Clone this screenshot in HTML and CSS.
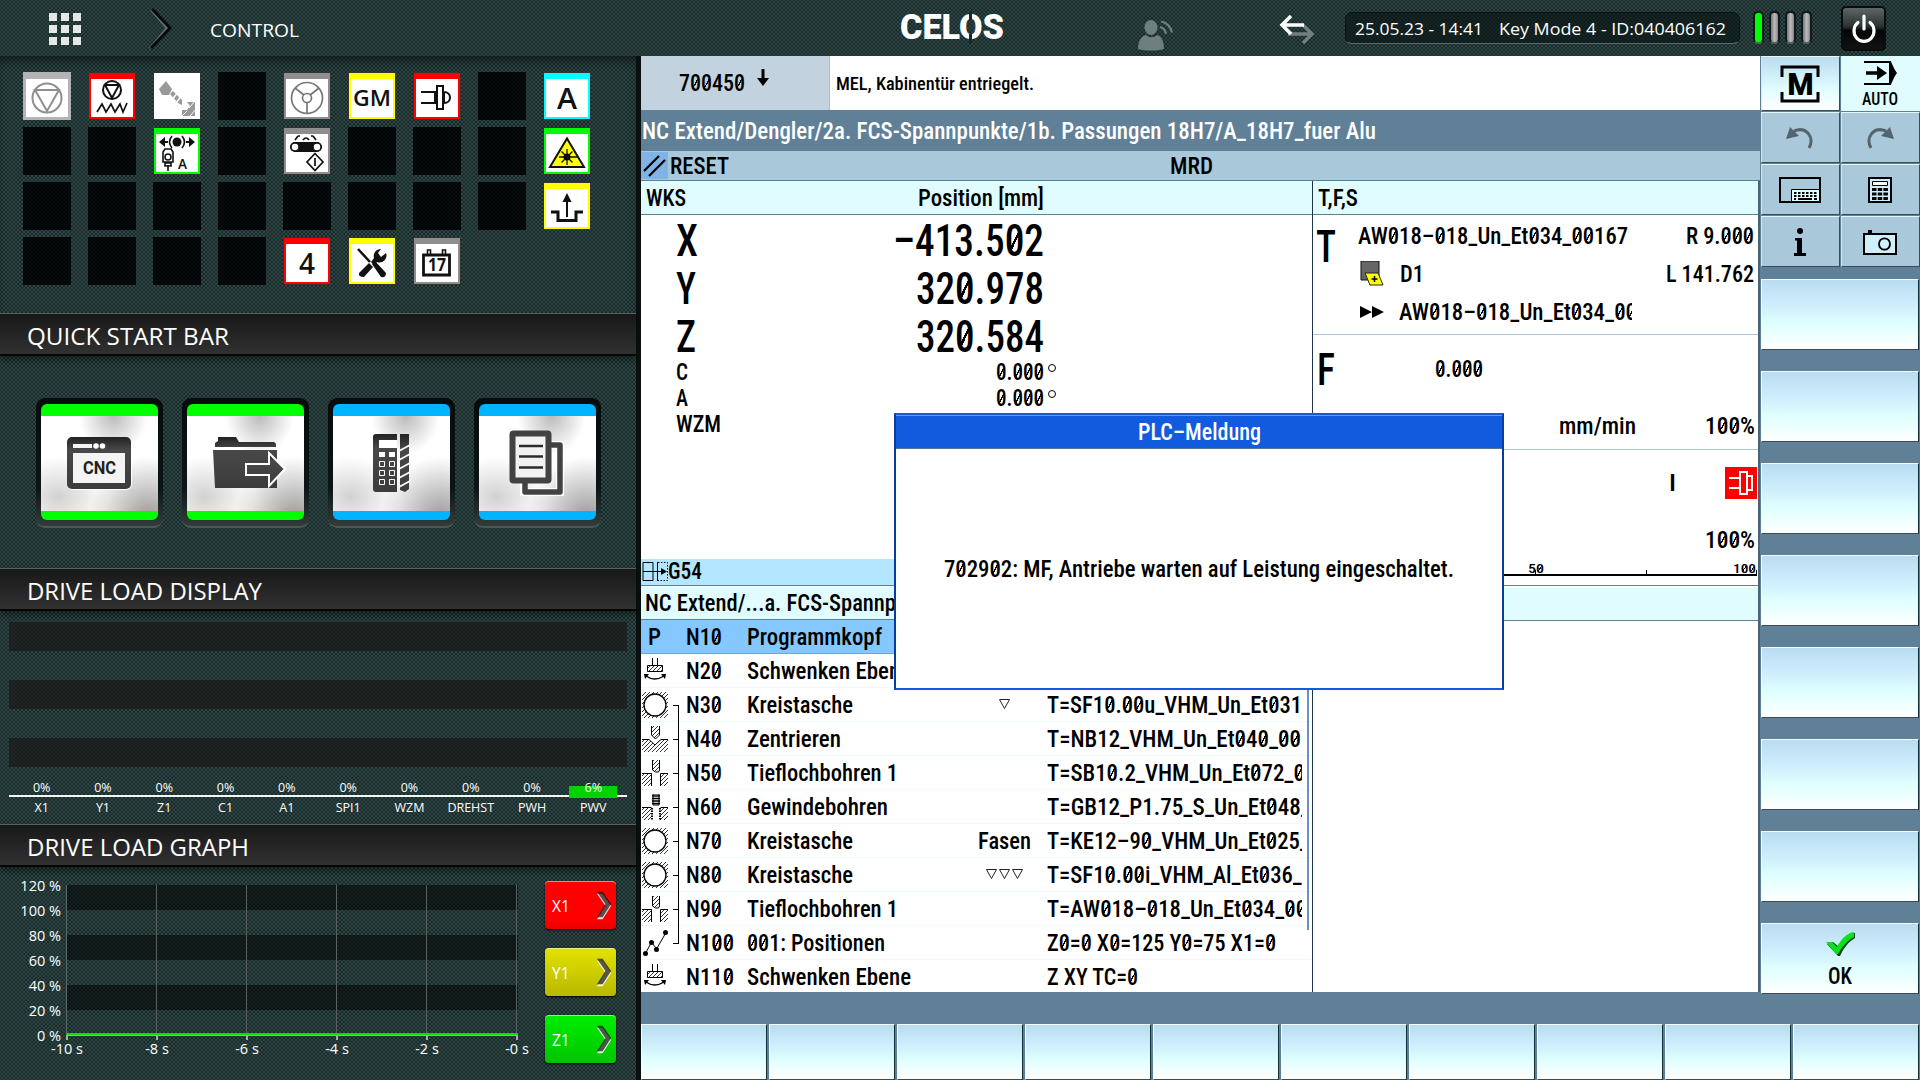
FILE: index.html
```html
<!DOCTYPE html>
<html lang="de">
<head>
<meta charset="utf-8">
<title>CELOS Control</title>
<link rel="stylesheet" href="styles.css">
</head>
<body>
<svg class="defs" aria-hidden="true">
  <defs>
    <pattern id="hatch" width="4" height="4" patternUnits="userSpaceOnUse"><path d="M-1 5L5-1M-1 1L1-1M3 5L5 3" stroke="#000" stroke-width=".8"/></pattern>
    <linearGradient id="dark" x1="0" y1="0" x2="0" y2="1"><stop offset="0" stop-color="#222"/><stop offset=".25" stop-color="#484848"/><stop offset="1" stop-color="#3c3c3c"/></linearGradient>
  </defs>
  <symbol id="i-swivel" viewBox="0 0 26 26"><path d="M10.500 0v7M15.500 0v7" stroke="#000"/><path d="M5.500 7.500h15v6h-15z" fill="url(#hatch)" stroke="#000"/><path d="M4 18q8.500 6 18 0" fill="none" stroke="#000" stroke-width="1.300"/><path d="M2 16h5l-4 5zM24 16h-5l4 5z"/></symbol>
  <symbol id="i-pocket" viewBox="0 0 26 26"><path d="M0 0h26v26H0z" fill="url(#hatch)"/><circle cx="13" cy="13" r="11" fill="#fff" stroke="#000" stroke-width="1.300"/></symbol>
  <symbol id="i-center" viewBox="0 0 26 26"><path d="M0 14h8l5 5 5-5h8v12H0z" fill="url(#hatch)"/><path d="M0 13.500h7l6 5.500 6-5.500h7" fill="none" stroke="#000"/><path d="M9.500 0v9l4 4 4-4V0" fill="url(#hatch)" stroke="#000"/></symbol>
  <symbol id="i-drill" viewBox="0 0 26 26"><path d="M0 14h9v12H0zM18 14h8v12h-8z" fill="url(#hatch)"/><path d="M0 13.500h9.500V26M26 13.500h-7.500V26" fill="none" stroke="#000"/><path d="M10.500 0v10l3 2h3l1-2V0" fill="url(#hatch)" stroke="#000"/></symbol>
  <symbol id="i-tap" viewBox="0 0 26 26"><path d="M0 14h9v12H0zM18 14h8v12h-8z" fill="url(#hatch)"/><path d="M0 13.500h9.500M26 13.500h-7.500" stroke="#000"/><path d="M10 14v12M18 14v12" stroke="#000" stroke-width="2" stroke-dasharray="1.500 1"/><path d="M11 0h6v11h-6z" fill="none" stroke="#000"/><path d="M10 2h8M10 4.500h8M10 7h8M10 9.500h8" stroke="#000" stroke-width="1.300"/></symbol>
  <symbol id="i-points" viewBox="0 0 26 26"><path d="M3.500 23.500l6-11.500 5 7L24 2.500" fill="none" stroke="#000"/><circle cx="3.500" cy="23.500" r="2.500"/><circle cx="9.500" cy="12.500" r="2.500"/><circle cx="14.500" cy="19.500" r="2.500"/><circle cx="23.500" cy="2.500" r="2.500"/></symbol>
  <symbol id="i-chev" viewBox="0 0 18 30"><path d="M1 2h6l9 13-9 14H1l9-14z" fill="#fff" opacity=".85" transform="translate(0 1)"/><path d="M1 1h6l9 13-9 14H1l9-14z" fill="#000" opacity=".65"/></symbol>
  <symbol id="i-tri" viewBox="0 0 11 11"><path d="M.500.500h10l-5 9z" fill="none" stroke="#222"/></symbol>
</svg>

<header class="topbar">
  <svg class="apps" width="32" height="33" viewBox="0 0 32 33" fill="#e4e9e8"><path d="M0 0h8v8H0zM12 0h8v8h-8zM24 0h8v8h-8zM0 12h8v8H0zM12 12h8v8h-8zM24 12h8v8h-8zM0 24h8v8H0zM12 24h8v8h-8zM24 24h8v8h-8z"/></svg>
  <svg class="crumb" width="24" height="42" viewBox="0 0 24 42" fill="none"><path d="M3 2l16 18L2 40" stroke="#667775" stroke-width="2"/><path d="M4 1l18 19L3 40" stroke="#050808" stroke-width="3"/></svg>
  <span class="fit ctl" data-w="89">CONTROL</span>
  <div class="logo"><span class="fit" data-w="104">CELOS</span></div>
  <svg class="user" width="36" height="31" viewBox="0 0 36 31" fill="#6f7f7e"><ellipse cx="13" cy="7.500" rx="6.500" ry="7.500"/><path d="M0 29c0-9 4-13 8-14 3 3 8 3 11 0 4 1 7 5 7 14-7 2-19 2-26 0z"/><path d="M22 7q5 1 6 7M23 1.500q9 2 11 11" fill="none" stroke="#6f7f7e" stroke-width="2.200"/></svg>
  <svg class="swap" width="36" height="30" viewBox="0 0 36 30" fill="none" stroke-width="3.500"><path d="M9 19h23M24 10l9 9-9 9" stroke="#71807f"/><path d="M25 10H3M12 1L3 10l9 9" stroke="#fff"/></svg>
  <div class="status"><span class="fit" data-w="128">25.05.23 - 14:41</span><span class="fit" data-w="227">Key Mode 4 - ID:040406162</span></div>
  <div class="leds"><i class="on"></i><i></i><i></i><i></i></div>
  <div class="power"><svg width="26" height="30" viewBox="0 0 26 30" fill="none" stroke="#fff" stroke-width="3.200" stroke-linecap="round"><path d="M7 8.500a10 10.500 0 1 0 12 0M13 2v13"/></svg></div>
</header>

<div class="body">
<aside class="left">
  <section class="tiles">
    <div class="tile gray1"><svg viewBox="0 0 48 48" fill="none" stroke="#8f8f8f" stroke-width="2"><circle cx="24" cy="26" r="14.500"/><path d="M12 18h24L24 39z"/></svg></div>
    <div class="tile red"><svg viewBox="0 0 48 48" fill="none" stroke="#111" stroke-width="2"><circle cx="24" cy="18" r="9"/><path d="M17 13h14l-7 13z"/><path d="M9 40l5-8 4 8 5-8 4 8 5-8 3 8 4-9" stroke-width="1.700"/></svg></div>
    <div class="tile plain"><svg viewBox="0 0 48 48" fill="#999"><path d="M6 17l7-8 6 8-3 6H9z"/><path d="M17 22l3-3 9 9v5l-4-2z"/><path d="M19 28l6-8M23 31l6-8" stroke="#fff" stroke-width="1.500"/><path d="M29 38h5l3-4-3-4h8v14H29z"/><path d="M29 44l5-5M37 44l6-7M36 36l6-7" stroke="#fff"/></svg></div>
    <div class="tile"></div>
    <div class="tile gray"><svg viewBox="0 0 48 48" fill="none" stroke="#777" stroke-width="1.700"><circle cx="24" cy="26" r="15.500"/><circle cx="24" cy="26" r="4.500"/><path d="M12 16l9 7M36 16l-9 7M24 31v10"/></svg></div>
    <div class="tile yellow"><span class="fit gm" data-w="38">GM</span></div>
    <div class="tile red"><svg viewBox="0 0 48 48" fill="none" stroke="#111" stroke-width="2"><path d="M8 20h14v11H8M24 14h6v23h-6zM31 20c8 0 8 11 0 11z"/></svg></div>
    <div class="tile"></div>
    <div class="tile cyan"><span class="fit big" data-w="20">A</span></div>

    <div class="tile"></div><div class="tile"></div>
    <div class="tile green"><svg viewBox="0 0 48 48" fill="#111"><circle cx="24" cy="15" r="4.500"/><path d="M6 15l6-5v4h3v2h-3v4zM42 15l-6-5v4h-3v2h3v4z"/><path d="M19 9q-5 6 0 12M29 9q5 6 0 12M10 25l2-3h6l2 3v10H10zM12 36h6v3h-6zM15 38v6" fill="none" stroke="#111" stroke-width="1.600"/><circle cx="15" cy="30" r="3" fill="none" stroke="#111" stroke-width="1.500"/></svg><span class="fit sub" data-w="9">A</span></div>
    <div class="tile"></div>
    <div class="tile gray"><svg viewBox="0 0 48 48"><rect x="7" y="15" width="32" height="10" rx="5" fill="#111"/><circle cx="12" cy="20" r="4" fill="#fff" stroke="#111" stroke-width="1.500"/><circle cx="34" cy="20" r="4" fill="#fff" stroke="#111" stroke-width="1.500"/><path d="M12 13l3-4M20 13q3-4 6 0M30 9l3 4M15 9h2M28 9h2M32 26.500l8 8.500-8 8.500-8-8.500zM32 31v8" fill="none" stroke="#111" stroke-width="1.700"/></svg></div>
    <div class="tile"></div><div class="tile"></div><div class="tile"></div>
    <div class="tile green"><svg viewBox="0 0 48 48"><path d="M24 11.500L41 40H7z" fill="#ff0" stroke="#111" stroke-width="2"/><circle cx="24" cy="30" r="3.500"/><path d="M24 22v16M16 30h19M18.500 24.500l11 11M29.500 24.500l-11 11" stroke="#111" stroke-width="1.300"/></svg></div>

    <div class="tile"></div><div class="tile"></div><div class="tile"></div><div class="tile"></div><div class="tile"></div><div class="tile"></div><div class="tile"></div><div class="tile"></div>
    <div class="tile yellow"><svg viewBox="0 0 48 48" fill="none" stroke="#111"><path d="M8 30h7v8.500h18V30h7" stroke-width="3"/><path d="M24 35V18" stroke-width="2"/><path d="M24 11l-4.500 9h9z" fill="#111" stroke="none"/></svg></div>

    <div class="tile"></div><div class="tile"></div><div class="tile"></div><div class="tile"></div>
    <div class="tile red"><span class="fit big" data-w="16">4</span></div>
    <div class="tile yellow"><svg viewBox="0 0 48 48" fill="#111"><path d="M10 12l12 13" stroke="#111" stroke-width="2.500"/><path d="M24 27l3-3 11 12q0 5-5 4zM11 36l10-10 4 4-9 10q-6 0-5-4z"/><path d="M38 16a7 7 0 0 1-9 9l-3 3-3-3 3-4a7 7 0 0 1 7-9l-3 4 3 4z"/></svg></div>
    <div class="tile gray"><svg viewBox="0 0 48 48" fill="none" stroke="#111"><path d="M10.500 18h26v20h-26z" stroke-width="2.800"/><path d="M14.500 17v-4h3v4M29.500 17v-4h3v4" stroke-width="1.600"/></svg><span class="fit cal" data-w="18">17</span></div>
  </section>

  <h2 class="bar"><span class="fit" data-w="202">QUICK START BAR</span></h2>
  <section class="quick">
    <div class="slot"><div class="card green"><svg viewBox="0 0 116 116"><rect x="27" y="34" width="64" height="52" rx="6" fill="#fff"/><rect x="26" y="33" width="64" height="52" rx="5" fill="url(#dark)"/><path d="M32 40h19v4H32zM32 49h52v30H32z" fill="#f4f4f4"/><circle cx="55" cy="42" r="2.800" fill="#fff"/><circle cx="61.500" cy="42" r="2.800" fill="#fff"/></svg><span class="fit cnc" data-w="33">CNC</span></div></div>
    <div class="slot"><div class="card green"><svg viewBox="0 0 116 116"><path d="M28 43v-4l3-2v-4h18l3 5h34q3 0 3 3v2zM26 46h64v38H28z" fill="url(#dark)"/><path d="M59 60h23V49l16 16-16 17V71H59z" fill="url(#dark)" stroke="#fff" stroke-width="2"/></svg></div></div>
    <div class="slot"><div class="card blue"><svg viewBox="0 0 116 116"><path d="M43 30h21v58H43q-3 0-3-3V33q0-3 3-3z" fill="url(#dark)"/><path d="M46 36h18v8H46zM46 48h6v5h-6zM56 48h6v5h-6z" fill="#fff"/><path d="M46.500 57.500h5v5h-5zM56.500 57.500h5v5h-5zM46.500 66.500h5v5h-5zM56.500 66.500h5v5h-5zM46.500 75.500h5v5h-5zM56.500 75.500h5v5h-5z" fill="none" stroke="#fff"/><path d="M67 30h9v55l-4 3-5-2z" fill="url(#dark)"/><path d="M66 47l11-6M66 56l11-6M66 65l11-6M66 74l11-6M66 83l11-6" stroke="#fff" stroke-width="1.800"/></svg></div></div>
    <div class="slot"><div class="card blue"><svg viewBox="0 0 116 116"><path d="M70 41h11v47H45V72" fill="none" stroke="#fff" stroke-width="8"/><path d="M70 41h11v47H46V72" fill="none" stroke="#424242" stroke-width="5.500" stroke-linejoin="round"/><rect x="33.500" y="29.500" width="36" height="47" rx="1" fill="#f2f2f2" stroke="#424242" stroke-width="6" stroke-linejoin="round"/><path d="M40 42h24M40 52.500h24M40 63.500h24" stroke="#2c2c2c" stroke-width="2.500"/></svg></div></div>
  </section>

  <h2 class="bar"><span class="fit" data-w="235">DRIVE LOAD DISPLAY</span></h2>
  <section class="load">
    <div class="bands"><i></i><i></i><i></i></div>
    <div class="pct"><span>0%</span><span>0%</span><span>0%</span><span>0%</span><span>0%</span><span>0%</span><span>0%</span><span>0%</span><span>0%</span><span class="hot">6%</span></div>
    <div class="axes"><span>X1</span><span>Y1</span><span>Z1</span><span>C1</span><span>A1</span><span>SPI1</span><span>WZM</span><span>DREHST</span><span>PWH</span><span>PWV</span></div>
  </section>

  <h2 class="bar"><span class="fit" data-w="222">DRIVE LOAD GRAPH</span></h2>
  <section class="graph">
    <div class="ylab"><span>120 %</span><span>100 %</span><span>80 %</span><span>60 %</span><span>40 %</span><span>20 %</span><span>0 %</span></div>
    <div class="plotcol">
      <div class="plot"></div>
      <div class="ticks"></div>
      <div class="xlab"><span>-10 s</span><span>-8 s</span><span>-6 s</span><span>-4 s</span><span>-2 s</span><span>-0 s</span></div>
    </div>
    <div class="series">
      <div class="sbtn sred"><span>X1</span><svg width="17" height="34"><use href="#i-chev"/></svg></div>
      <div class="sbtn syel"><span>Y1</span><svg width="17" height="34"><use href="#i-chev"/></svg></div>
      <div class="sbtn sgrn"><span>Z1</span><svg width="17" height="34"><use href="#i-chev"/></svg></div>
    </div>
  </section>
</aside>

<main class="hmi">
  <div class="upper">
    <div class="main">
      <div class="alarm">
        <div class="num"><span class="fit" data-w="66">700450</span><svg width="12" height="17" viewBox="0 0 12 17"><path d="M4.500 0h3v9H12l-6 8-6-8h4.500z"/></svg></div>
        <span class="fit msg" data-w="198">MEL, Kabinentür entriegelt.</span>
      </div>
      <div class="path"><span class="fit" data-w="734">NC Extend/Dengler/2a. FCS-Spannpunkte/1b. Passungen 18H7/A_18H7_fuer Alu</span></div>
      <div class="state"><svg width="27" height="27" viewBox="0 0 27 27"><path d="M3 19L18 4M8 24L24 8" stroke="#000" stroke-width="2.200"/></svg><span class="fit" data-w="59">RESET</span><span class="fit mrd" data-w="43">MRD</span></div>
      <div class="cols">
        <div class="colL">
          <div class="head"><span class="fit" data-w="40">WKS</span><span class="fit pos" data-w="126">Position [mm]</span></div>
          <div class="axis xl"><span class="fit" data-w="22">X</span><span class="fit" data-w="151">–413.502</span></div>
          <div class="axis xl"><span class="fit" data-w="20">Y</span><span class="fit" data-w="128">320.978</span></div>
          <div class="axis xl"><span class="fit" data-w="20">Z</span><span class="fit" data-w="128">320.584</span></div>
          <div class="axis small"><span class="fit" data-w="12">C</span><span class="fit" data-w="48">0.000</span><i class="deg"></i></div>
          <div class="axis small"><span class="fit" data-w="12">A</span><span class="fit" data-w="48">0.000</span><i class="deg"></i></div>
          <div class="axis small"><span class="fit" data-w="45">WZM</span></div>
          <div class="g54"><svg width="27" height="22" viewBox="0 0 27 22" fill="none" stroke="#000"><path d="M1 1.500h10v18H1zM15.500 1v19M1 10.500h22"/><path d="M16 1.500h9.500v18H16" stroke-dasharray="1.500 1.500"/><path d="M19 7l6 3.500-6 3.500z" fill="#000" stroke="none"/></svg><span class="fit" data-w="34">G54</span></div>
          <div class="prog"><span class="fit" data-w="251">NC Extend/...a. FCS-Spannp</span></div>
          <div class="list">
            <div class="row sel"><span class="fit p" data-w="13">P</span><b></b><span class="fit" data-w="36">N10</span><span class="fit" data-w="135">Programmkopf</span></div>
            <div class="row"><svg><use href="#i-swivel"/></svg><b></b><span class="fit" data-w="36">N20</span><span class="fit" data-w="164">Schwenken Ebene</span></div>
            <div class="row"><svg><use href="#i-pocket"/></svg><b class="br first"></b><span class="fit" data-w="36">N30</span><span class="fit" data-w="106">Kreistasche</span><em><svg class="tri"><use href="#i-tri"/></svg></em><div class="tool"><span class="fit" data-w="255">T=SF10.00u_VHM_Un_Et031</span></div></div>
            <div class="row"><svg><use href="#i-center"/></svg><b class="br"></b><span class="fit" data-w="36">N40</span><span class="fit" data-w="94">Zentrieren</span><em></em><div class="tool"><span class="fit" data-w="254">T=NB12_VHM_Un_Et040_00</span></div></div>
            <div class="row"><svg><use href="#i-drill"/></svg><b class="br"></b><span class="fit" data-w="36">N50</span><span class="fit" data-w="151">Tieflochbohren 1</span><em></em><div class="tool"><span class="fit" data-w="258">T=SB10.2_VHM_Un_Et072_0</span></div></div>
            <div class="row"><svg><use href="#i-tap"/></svg><b class="br"></b><span class="fit" data-w="36">N60</span><span class="fit" data-w="141">Gewindebohren</span><em></em><div class="tool"><span class="fit" data-w="263">T=GB12_P1.75_S_Un_Et048_</span></div></div>
            <div class="row"><svg><use href="#i-pocket"/></svg><b class="br"></b><span class="fit" data-w="36">N70</span><span class="fit" data-w="106">Kreistasche</span><em><span class="fit" data-w="53">Fasen</span></em><div class="tool"><span class="fit" data-w="262">T=KE12–90_VHM_Un_Et025_</span></div></div>
            <div class="row"><svg><use href="#i-pocket"/></svg><b class="br"></b><span class="fit" data-w="36">N80</span><span class="fit" data-w="106">Kreistasche</span><em><svg class="tri"><use href="#i-tri"/></svg><svg class="tri"><use href="#i-tri"/></svg><svg class="tri"><use href="#i-tri"/></svg></em><div class="tool"><span class="fit" data-w="255">T=SF10.00i_VHM_Al_Et036_</span></div></div>
            <div class="row"><svg><use href="#i-drill"/></svg><b class="br"></b><span class="fit" data-w="36">N90</span><span class="fit" data-w="151">Tieflochbohren 1</span><em></em><div class="tool"><span class="fit" data-w="260">T=AW018–018_Un_Et034_00</span></div></div>
            <div class="row"><svg><use href="#i-points"/></svg><b class="br last"></b><span class="fit" data-w="48">N100</span><span class="fit" data-w="138">001: Positionen</span><em></em><div class="tool"><span class="fit" data-w="229">Z0=0 X0=125 Y0=75 X1=0</span></div></div>
            <div class="row"><svg><use href="#i-swivel"/></svg><b></b><span class="fit" data-w="48">N110</span><span class="fit" data-w="164">Schwenken Ebene</span><em></em><div class="tool"><span class="fit" data-w="91">Z XY TC=0</span></div></div>
            <i class="scroll"></i>
          </div>
        </div>
        <div class="colR">
          <div class="head"><span class="fit" data-w="40">T,F,S</span></div>
          <div class="sec tsec">
            <span class="fit letter" data-w="20">T</span>
            <div class="rows">
              <div class="r"><span class="fit" data-w="270">AW018–018_Un_Et034_00167</span><span class="fit" data-w="68">R 9.000</span></div>
              <div class="r r2"><svg width="25" height="25" viewBox="0 0 25 25"><path d="M1 0h18v19H1z" fill="#666" stroke="#111"/><path d="M5 12h13l5 12H10z" fill="#ff0" stroke="#222"/><path d="M11.500 18h6M14.500 15v6" stroke="#000" stroke-width="1.500"/></svg><span class="fit" data-w="24">D1</span><span class="fit end" data-w="88">L 141.762</span></div>
              <div class="r"><svg width="24" height="12" viewBox="0 0 24 12"><path d="M0 0l12 6-12 6zM12 0l12 6-12 6z"/></svg><div class="next"><span class="fit" data-w="238">AW018–018_Un_Et034_00</span></div></div>
            </div>
          </div>
          <div class="sec fsec">
            <span class="fit letter" data-w="18">F</span>
            <div class="rows">
              <div class="r r68"><span class="fit feed" data-w="48">0.000</span></div>
              <div class="r r46"><span class="fit end" data-w="77">mm/min</span><span class="fit ovr" data-w="50">100%</span></div>
            </div>
          </div>
          <div class="sec ssec">
            <span class="fit letter" data-w="20">S</span>
            <div class="rows">
              <div class="r r66"><span class="fit end" data-w="7">I</span><svg class="spin" width="32" height="32" viewBox="0 0 32 32"><path d="M0 0h32v32H0z" fill="#f00"/><path d="M4 11h11M4 21h11M15 5h7v22h-7zM22 9h5v14h-5" fill="none" stroke="#fff" stroke-width="2"/></svg></div>
              <div class="r r48"><span class="fit end" data-w="50">100%</span></div>
              <div class="scale"><span class="fit" data-w="16">50</span><span class="fit" data-w="23">100</span></div>
            </div>
          </div>
          <div class="blank"></div>
        </div>
      </div>
    </div>

    <nav class="side">
      <div class="grid">
        <div class="gb hi"><svg width="40" height="38" viewBox="0 0 40 38" fill="none" stroke="#000" stroke-width="3"><path d="M2 12V2h36v10M2 27v9h36v-9"/></svg><span class="fit m" data-w="27">M</span></div>
        <div class="gb auto"><svg width="34" height="26" viewBox="0 0 34 26" fill="none" stroke="#000"><path d="M1 2h26l5 11-5 11H1" stroke-width="2.200"/><path d="M26 2l8 11-8 11z" fill="#000" stroke="none"/><path d="M3 13h14" stroke-width="3.500"/><path d="M14 6l10 7-10 7z" fill="#000" stroke="none"/></svg><span class="fit" data-w="36">AUTO</span></div>
        <div class="gb"><svg width="30" height="24" viewBox="0 0 30 24"><path d="M9 5c12-5 21 6 15 17" fill="none" stroke="#55656d" stroke-width="3"/><path d="M1 13L5 1l9 9z" fill="#55656d"/></svg></div>
        <div class="gb"><svg width="30" height="24" viewBox="0 0 30 24"><path d="M21 5C9 0 0 11 6 22" fill="none" stroke="#55656d" stroke-width="3"/><path d="M29 13L25 1l-9 9z" fill="#55656d"/></svg></div>
        <div class="gb"><svg width="42" height="26" viewBox="0 0 42 26"><path d="M1 1h40v24H1z" fill="none" stroke="#000" stroke-width="2"/><path d="M12.500 12.500h28v12h-28z" fill="#e0fcff" stroke="#000"/><path d="M15 16h24M15 19h24" stroke="#000" stroke-width="2" stroke-dasharray="2.500 1.500"/><path d="M15 22h2M19 22h14M35 22h3" stroke="#000" stroke-width="2"/></svg></div>
        <div class="gb"><svg width="24" height="26" viewBox="0 0 24 26"><path d="M1 1h22v24H1z" fill="#cfeffa" stroke="#000" stroke-width="2"/><path d="M4.500 4.500h15v4h-15z" fill="#fff" stroke="#000"/><path d="M4 12.500h16M4 17h16M4 21.500h16" stroke="#000" stroke-width="3" stroke-dasharray="4.500 1.200"/></svg></div>
        <div class="gb"><svg width="14" height="28" viewBox="0 0 14 28"><circle cx="7" cy="3" r="3"/><path d="M2 10h7v15h4v3H1v-3h3V12.500H2z"/></svg></div>
        <div class="gb"><svg width="34" height="25" viewBox="0 0 34 25"><path d="M1 4h32v20H1z" fill="#cfeffa" stroke="#000" stroke-width="2"/><path d="M5 0h4v4H5z"/><ellipse cx="21.500" cy="14" rx="5.500" ry="5.700" fill="none" stroke="#000" stroke-width="1.800"/></svg></div>
      </div>
      <div class="keys">
        <div class="key"></div><div class="key"></div><div class="key"></div><div class="key"></div><div class="key"></div><div class="key"></div><div class="key"></div>
        <div class="key ok"><svg width="32" height="26" viewBox="0 0 32 26"><path d="M2 12l6-2 6 5C17 8 23 2 30 1v5C23 10 18 17 15 24h-2z" fill="#07430d" transform="translate(1 1)"/><path d="M2 11h6l5 5C17 8 23 2 30 1v5C23 10 18 16 14 23h-2z" fill="#0be01c"/></svg><span class="fit" data-w="24">OK</span></div>
      </div>
    </nav>
  </div>
  <div class="bottom"><div class="key"></div><div class="key"></div><div class="key"></div><div class="key"></div><div class="key"></div><div class="key"></div><div class="key"></div><div class="key"></div><div class="key"></div><div class="key"></div></div>
</main>
</div>

<div class="dialog">
  <div class="title"><span class="fit" data-w="123">PLC–Meldung</span></div>
  <div class="text"><span class="fit" data-w="510">702902: MF, Antriebe warten auf Leistung eingeschaltet.</span></div>
</div>
<script src="fit.js"></script>
</body>
</html>
```
FILE: fit.js
```js
// Condenses each label to the width given in data-w,
// and gives the control panel's zeros their slash.
document.querySelectorAll('.fit').forEach(function (el) {
  var inner = document.createElement('span');
  inner.className = 'inner';
  var text = el.textContent;
  if (el.closest('.hmi, .dialog')) {
    inner.innerHTML = text.replace(/0/g, '<span class="zero">0</span>');
  } else {
    inner.textContent = text;
  }
  el.textContent = '';
  el.appendChild(inner);
  var w = parseFloat(el.dataset.w);
  var natural = inner.getBoundingClientRect().width;
  el.style.width = w + 'px';
  inner.style.transform = 'scaleX(' + w / natural + ')';
});
```
FILE: styles.css
```css
* { box-sizing: border-box; }
body { margin: 0; width: 1920px; height: 1080px; overflow: hidden; position: relative; background: #0a0f10; font-family: "Open Sans", "Noto Sans", sans-serif; color: #fff; }
.defs { position: absolute; width: 0; height: 0; }
svg { display: block; flex: none; }
.fit { display: block; flex: none; white-space: pre; }
.inner { display: inline-block; transform-origin: 0 50%; }
.zero { background: linear-gradient(to bottom right, transparent 43%, #000 43%, #000 57%, transparent 57%) 50% .37em/.24em .44em no-repeat; }

.topbar, .left {
  background-color: #182a2a;
  background-image: radial-gradient(circle, #38504f 0.6px, transparent 1px), radial-gradient(circle, #38504f 0.6px, transparent 1px);
  background-size: 4px 4px;
  background-position: 0 0, 2px 2px;
}

/* top bar */
.topbar { height: 56px; display: flex; align-items: flex-start; padding-left: 49px; }
.apps { margin-top: 13px; }
.crumb { margin: 8px 0 0 67px; }
.ctl { margin: 17px 0 0 38px; font-size: 19px; line-height: 26px; }
.logo { position: relative; margin: 6px 0 0 601px; font: 900 34.500px/42px Roboto, sans-serif; }
.logo::after { content: ""; position: absolute; left: 69px; top: 5px; width: 3px; height: 32px; background: linear-gradient(#182a2a 9px, transparent 9px, transparent 23px, #182a2a 23px); }
.user { margin: 20px 0 0 134px; }
.swap { margin: 15px 0 0 105px; }
.status { margin: 12px 0 0 30px; width: 395px; height: 32px; border-radius: 7px; background: rgba(5,12,12,.55); border: 1px solid #0b1414; border-bottom-color: #5d6d6c; display: flex; padding-left: 9px; gap: 16px; font-size: 17px; line-height: 31px; }
.leds { display: flex; gap: 5px; margin: 11px 0 0 13px; }
.leds i { width: 11px; height: 33px; border: 2px solid #111a1a; border-radius: 5px; background: linear-gradient(90deg, #777, #bbb, #888); border-bottom-color: #556463; }
.leds .on { background: #0f0; }
.power { margin: 6px 0 0 29px; width: 45px; height: 45px; border-radius: 5px; border: 2px solid #0a0d0d; background: linear-gradient(#5d6665, #2a3232 45%, #050707 55%, #111); display: grid; place-items: center; }

.body { display: flex; height: 1024px; }

/* left column */
.left { width: 636px; flex: none; }
.tiles { height: 257px; padding: 16px 0 0 23px; display: grid; grid-template-columns: repeat(9, 48px); grid-auto-rows: 48px; column-gap: 17px; row-gap: 7px; box-shadow: inset 0 10px 12px -6px rgba(0,0,0,.55); }
.tile { background: rgba(0,0,0,.84); position: relative; display: grid; place-items: center; color: #111; }
.tile svg { position: absolute; left: 0; top: 0; width: 48px; height: 48px; }
.gray1, .gray, .red, .yellow, .cyan, .tile.green, .plain { background: #fff; border: 1px solid #333; }
.gray1, .gray { box-shadow: inset 0 6px #8e8e8e, inset 0 0 0 2px #8e8e8e; }
.gray1 { box-shadow: inset 0 6px #b4b4b4, inset 0 0 0 2px #b4b4b4; border-color: #b4b4b4; }
.red { box-shadow: inset 0 6px #f00, inset 0 0 0 2px #f00; }
.yellow { box-shadow: inset 0 6px #ff0, inset 0 0 0 2px #ff0; }
.cyan { box-shadow: inset 0 6px #0ff, inset 0 0 0 2px #0ff; }
.tile.green { box-shadow: inset 0 6px #0f0, inset 0 0 0 2px #0f0; }
.tile.red svg, .tile.gray svg, .tile.yellow svg, .tile.green svg, .tile.plain svg, .tile.gray1 svg { left: -1px; top: -1px; }
.gm { font-size: 21px; font-weight: 600; line-height: 20px; margin-top: 3px; }
.big { font-size: 28px; font-weight: 600; line-height: 28px; margin-top: 3px; }
.sub { position: absolute; left: 24px; top: 28px; font-size: 14px; font-weight: 600; line-height: 16px; }
.cal { font-size: 17px; font-weight: 700; line-height: 16px; margin-top: 8px; }

.bar { margin: 0; height: 43px; padding-left: 27px; border-top: 1px solid #59625f; border-bottom: 2px solid #050707; background: linear-gradient(#181818, #313131); font-size: 24px; font-weight: 400; line-height: 43px; white-space: nowrap; box-shadow: 0 4px 6px rgba(0,0,0,.4); }
.quick { height: 212px; padding: 42px 0 0 36px; display: flex; gap: 19px; }
.slot { width: 127px; height: 130px; border-radius: 9px; padding: 6px 5px; background: linear-gradient(#060c0c, #0c1515 70%, #323c3b); border-bottom: 2px solid #4c5857; }
.card { position: relative; width: 117px; height: 116px; border-radius: 6px; overflow: hidden; border-top: 12px solid #0f0; border-bottom: 9px solid #0f0;
  background: radial-gradient(ellipse 34px 38px at 62% 0, #bbb, transparent), radial-gradient(ellipse 60px 62px at 92% 108%, #999, transparent), radial-gradient(ellipse 50px 40px at 15% 85%, #d2d2d2, transparent), #fff; }
.card.blue { border-color: #00b4ff; }
.card svg { position: absolute; left: 0; top: -12px; width: 116px; height: 116px; }
.cnc { position: absolute; left: 42px; top: 43px; color: #222; font: 700 18px/18px Roboto, sans-serif; }

.load { height: 213px; padding: 11px 9px 0; font-size: 12.500px; }
.bands { display: grid; gap: 29px; }
.bands i { height: 29px; background: rgba(27,30,28,.84); }
.pct { display: grid; grid-template-columns: repeat(10, 61.300px); padding-left: 2px; margin-top: 10px; height: 20px; border-bottom: 2px solid #f4f4f4; line-height: 21px; text-align: center; white-space: nowrap; }
.pct .hot { background: linear-gradient(#0000 9px, #00d400 9px) center/48px 100% no-repeat; }
.axes { display: grid; grid-template-columns: repeat(10, 61.300px); padding-left: 2px; line-height: 22px; text-align: center; white-space: nowrap; }

.graph { height: 212px; padding-top: 14px; display: flex; }
.ylab { width: 61px; margin-top: -5px; display: grid; grid-auto-rows: 25px; align-content: start; text-align: right; font-size: 14.500px; line-height: 20px; }
.plotcol { margin: 4px 0 0 5px; width: 452px; }
.plot { height: 150px; border-left: 1px solid #5c6a69; border-bottom: 2px solid #00e000;
  background: repeating-linear-gradient(90deg, transparent 0 89px, #59615f 89px 90px), repeating-linear-gradient(rgba(0,0,0,.55) 0 25px, transparent 25px 50px); }
.ticks { height: 5px; background: repeating-linear-gradient(90deg, #aaa 0 2px, transparent 2px 90px); border-top: 1px solid #aaa; }
.xlab { margin: 0 0 0 -44px; display: grid; grid-template-columns: repeat(6, 90px); text-align: center; font-size: 14.500px; line-height: 17px; }
.series { margin-left: 27px; display: grid; gap: 19px; align-content: start; }
.sbtn { width: 71px; height: 48px; border-radius: 4px; display: flex; align-items: center; justify-content: space-between; padding: 0 3px 0 7px; font-size: 15.500px; line-height: 30px; box-shadow: 0 1px 2px #000, inset 0 1px rgba(255,255,255,.5); }
.sbtn span { padding-top: 2px; }
.sred { background: linear-gradient(#f00 80%, #e80000); }
.syel { background: linear-gradient(#e2e200, #b8b800); }
.sgrn { background: linear-gradient(#00ee00, #00c400); }

/* control panel */
.hmi { margin-left: 5px; width: 1279px; background: #5f8097; color: #000; font: 500 23px/28px Roboto, sans-serif; font-stretch: 75%; }
.hmi .fit, .dialog .fit { padding-top: 2px; }
.upper { display: flex; height: 936px; }
.main { width: 1119px; flex: none; background: #fff; }
.alarm { height: 54px; display: flex; align-items: center; }
.num { width: 189px; height: 54px; background: #c2d2de; border-right: 1px solid #a9c0d0; padding-left: 38px; display: flex; align-items: center; gap: 12px; }
.num svg { margin-top: -12px; }
.msg { margin-left: 6px; font-size: 18.500px; }
.path { height: 41px; padding-left: 1px; background: #5f8097; color: #fff; display: flex; align-items: center; }
.state { height: 30px; background: #a9c9db; border-bottom: 1px solid #5a819a; display: flex; align-items: center; gap: 2px; }
.state svg { background: #7fb2e5; }
.mrd { margin-left: 439px; }
.cols { display: flex; height: 811px; }
.colL { width: 671px; flex: none; }
.colR { width: 448px; border-left: 1px solid #1d3545; border-right: 2px solid #486578; }
.head { height: 34px; background: #e0fcff; border-bottom: 1px solid #5a819a; display: flex; align-items: center; padding-left: 5px; }
.pos { margin-left: 232px; }
.axis { height: 26px; display: grid; grid-template-columns: 167px 201px 8px; padding-left: 35px; align-items: center; }
.axis > :nth-child(2) { justify-self: end; }
.hmi .axis.small .fit { padding-top: 0; }
.axis.xl { height: 48px; font-size: 45px; line-height: 48px; }
.deg { width: 8px; height: 8px; border: 1px solid #000; border-radius: 50%; margin: -11px 0 0 4px; }
.g54 { margin-top: 121px; height: 28px; background: #b5e6ff; border-bottom: 1px solid #5a819a; display: flex; align-items: center; padding-left: 1px; border-top: 1px solid #fff; }
.g54 .fit { margin: -3px 0 0 -1px; }
.prog { height: 34px; background: #e0fcff; border-bottom: 1px solid #5a819a; border-top: 1px solid #fff; padding-left: 4px; display: flex; align-items: center; }
.list { height: 373px; position: relative; overflow: hidden; }
.row { height: 34px; display: grid; grid-template-columns: 32px 13px 61px 226px 62px 12px 255px; align-items: center; border-bottom: 1px solid #eefbfd; }
.row > svg { width: 26px; height: 26px; margin-left: 1px; }
.row.sel { background: #85c8ff; border-bottom-color: #6aa5e0; }
.p { margin-left: 7px; }
.row b { align-self: stretch; display: block; width: 6px; }
.br { background: linear-gradient(#000, #000) 0 17px/6px 1px no-repeat, linear-gradient(#000, #000) 5px 0/1px 40px no-repeat; margin-bottom: -1px; }
.br.first { background-position: 0 17px, 5px 17px; }
.br.last { background-size: 6px 1px, 1px 17px; }
.row em { font-style: normal; display: flex; justify-content: center; gap: 2px; }
.tri { width: 11px; height: 11px; }
.tool { grid-column: 7; overflow: hidden; width: 255px; height: 30px; }
.scroll { position: absolute; right: 3px; top: 0; width: 2px; height: 310px; background: #6c8fc0; }

.sec { display: flex; padding-left: 3px; border-bottom: 1px solid #a9c9db; }
.letter { font-size: 45px; line-height: 48px; height: 48px; margin-right: 22px; }
.rows { width: 401px; }
.r { height: 39px; display: flex; align-items: center; }
.tsec { height: 120px; padding-top: 1px; }
.tsec .letter { margin-top: 5px; }
.tsec .r > .fit:last-child:not(:first-child) { margin-left: auto; }
.tsec .rows { width: 396px; }
.tsec .r2 { height: 37px; }
.r2 svg { margin-right: 15px; }
.r svg + .next { margin-left: 15px; }
.tsec .r > svg { margin-left: 2px; }
.next { width: 233px; overflow: hidden; height: 30px; }
.end { margin-left: auto; }
.fsec { height: 115px; }
.fsec .letter { margin: 9px 26px 0 1px; }
.r68 { height: 68px; } .r46 { height: 46px; } .r66 { height: 66px; } .r48 { height: 48px; }
.fsec .rows { width: 394px; }
.feed { margin-left: 74px; }
.ovr { margin-left: 69px; }
.ssec { height: 136px; border-bottom-color: #5a819a; }
.ssec .letter { margin-top: 9px; margin-right: 24px; }
.ssec .rows { width: 397px; }
.spin { margin-left: 49px; }
.r48 .end { margin-right: 2px; }
.hmi .scale .fit { padding-top: 0; }
.scale { height: 12px; border-bottom: 2px solid #000; margin-left: -30px; display: flex; justify-content: flex-end; gap: 189px; font-size: 13px; line-height: 10px; padding-right: 1px; background: linear-gradient(#000,#000) 205px 100%/1px 4px no-repeat, linear-gradient(#000,#000) 316px 100%/1px 4px no-repeat, linear-gradient(#000,#000) 100% 100%/1px 4px no-repeat; }
.blank { height: 35px; background: #e0fcff; border-bottom: 1px solid #5a819a; border-top: 2px solid #fff; }

/* soft keys */
.side { width: 160px; padding-left: 1px; }
.grid { display: grid; grid-template-columns: 79px 79px; column-gap: 1px; grid-template-rows: 55px 51px 51px 51px; row-gap: 1px; }
.gb { background: #a9c9db; border-top: 1px solid #e6f6fb; border-left: 1px solid #d4e8f2; border-bottom: 1px solid #34505c; border-right: 1px solid #34505c; display: grid; place-items: center; position: relative; padding: 1px 1px 0 0; }
.gb.hi { background: linear-gradient(#badcf0, #e0fcff 60%, #fff); }
.gb.auto { background: #e0fcff; align-content: center; border-color: #e0fcff; font-size: 18px; line-height: 21px; }
.m { position: absolute; left: 25px; top: 11px; font-size: 32px; font-weight: 700; }
.keys { margin-top: 12px; display: grid; gap: 21px; width: 158px; }
.key { height: 71px; background: linear-gradient(#badcf0, #c9ebfb 30%, #e0ffff 65%, #fff); border: 1px solid #f4fcff; border-right: 1px solid #12303a; border-bottom: 1px solid #3a4a5c; }
.key.ok { display: grid; justify-items: center; align-content: start; padding: 7px 1px 0 0; }
.ok .fit { margin-top: 4px; }
.bottom { margin-top: 32px; display: flex; gap: 2px; }
.bottom .key { width: 126px; height: 56px; flex: none; }

/* message dialog */
.dialog { position: absolute; left: 894px; top: 413px; width: 610px; height: 277px; background: #fff; border: 2px solid #115bdf; border-left-color: #0a3ba0; border-right-color: #0a3ba0; font: 500 23px/28px Roboto, sans-serif; font-stretch: 75%; color: #000; }
.title { height: 34px; background: #115bdf; border-top: 1px solid #5f9df5; border-bottom: 1px solid #4d7799; color: #fff; display: grid; place-items: center; }
.text { height: 239px; display: grid; place-items: center; }
```
